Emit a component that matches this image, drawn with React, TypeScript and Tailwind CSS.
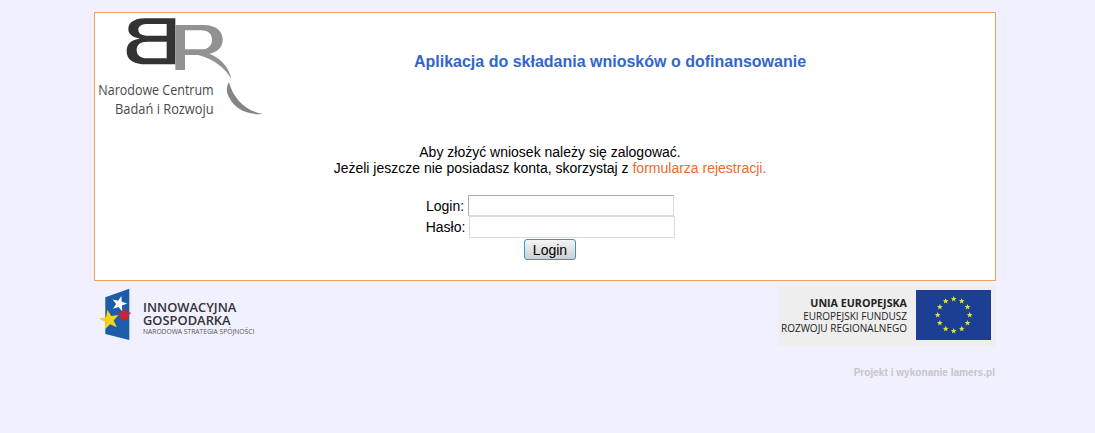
const sans = { fontFamily: '"Liberation Sans", Arial, sans-serif' }
const openSans = { fontFamily: '"Open Sans", sans-serif' }

// five-pointed star as polygon points
function star(cx: number, cy: number, outer: number, inner: number, rot = 0) {
  const pts: string[] = []
  for (let i = 0; i < 10; i++) {
    const r = i % 2 === 0 ? outer : inner
    const a = ((-90 + rot + i * 36) * Math.PI) / 180
    pts.push(`${(cx + r * Math.cos(a)).toFixed(2)},${(cy + r * Math.sin(a)).toFixed(2)}`)
  }
  return pts.join(' ')
}

function BrLogo() {
  return (
    <svg width="170" height="115" viewBox="15 24 510 345" className="block">
      <path
        fillRule="evenodd"
        fill="#333333"
        d="M256 40 H165 C130 40 115 55 115 72 C115 88 128 97 150 101 C125 104 110 115 110 138 C110 165 130 178 170 178 H256 Z M230 57 V92 H175 C155 92 145 85 145 74 C145 63 155 57 175 57 Z M230 110 V160 H172 C150 160 140 150 140 135 C140 120 150 110 172 110 Z"
      />
      <path
        fillRule="evenodd"
        fill="#929292"
        d="M256 60 H340 C380 60 398 80 398 104 C398 126 384 140 358 146 C395 160 418 190 424 222 C405 188 370 162 325 150 H285 V195 H256 Z M285 76 V133 H335 C355 133 366 120 366 104 C366 88 355 76 335 76 Z"
      />
      <path fill="#858585" d="M417 232 C430 280 465 318 518 327 C465 332 425 305 412 265 C409 252 411 240 417 232 Z" />
      <text x="25" y="270" fontSize="46" fill="#4a4a4a" textLength="346" lengthAdjust="spacingAndGlyphs" style={openSans}>
        Narodowe Centrum
      </text>
      <text x="75" y="328" fontSize="46" fill="#4a4a4a" textLength="296" lengthAdjust="spacingAndGlyphs" style={openSans}>
        Badań i Rozwoju
      </text>
    </svg>
  )
}

function InnowacyjnaLogo() {
  return (
    <div className="flex items-center">
      <svg width="40" height="60" viewBox="0 0 40 60" className="block">
        <path fill="#1d5ca8" d="M11.3 10.3 L35.3 1.7 V53 L11.3 47 Z" />
        <polygon fill="#ffffff" points={star(25.3, 16.8, 8, 3.2, 15)} />
        <polygon fill="#d2232a" points={star(30.3, 28, 7.5, 3.4, 0)} />
        <polygon fill="#f4d31f" points={star(15.3, 33, 10.5, 4.4, -10)} />
      </svg>
      <div className="ml-[9px] mt-[3px] text-[#333]" style={openSans}>
        <div className="text-[12.9px] leading-[13px] font-semibold">INNOWACYJNA</div>
        <div className="text-[12.9px] leading-[13px] font-semibold">GOSPODARKA</div>
        <div className="mt-[1px] text-[6.7px] leading-[8px] whitespace-nowrap text-[#555]">NARODOWA STRATEGIA SPÓJNOŚCI</div>
      </div>
    </div>
  )
}

const euStars = Array.from({ length: 12 }, (_, i) => {
  const a = (i * 30 * Math.PI) / 180
  return [37.7 + 16 * Math.sin(a), 25 - 16 * Math.cos(a)]
})

function EuLogo() {
  return (
    <div className="flex items-center bg-[#eeeeee] w-[218px] h-[60px] pl-[4px]">
      <div className="flex w-[125px] flex-col items-end text-[#222] text-[10px] leading-[12.5px]" style={openSans}>
        <div className="text-[10.7px] font-bold">UNIA EUROPEJSKA</div>
        <div>EUROPEJSKI FUNDUSZ</div>
        <div className="whitespace-nowrap">ROZWOJU REGIONALNEGO</div>
      </div>
      <svg width="75" height="50" viewBox="0 0 75 50" className="block ml-[9px] mb-[2px]">
        <rect width="75" height="50" fill="#1c3f94" />
        {euStars.map(([x, y], i) => (
          <polygon key={i} fill="#dfe23e" points={star(x, y, 3, 1.3)} />
        ))}
      </svg>
    </div>
  )
}

export default function App() {
  return (
    <div className="min-h-[433px] bg-[#f0f0ff] pt-3 pl-[94px]" style={sans}>
      <div className="w-[902px]">
        <div className="h-[269px] border border-[#f0a060] bg-white">
          <div className="flex h-[115px]">
            <BrLogo />
            <h1 className="flex-1 pr-[40px] pt-[39px] text-center text-[16px] leading-[20px] font-bold text-[#3366cc]">
              Aplikacja do składania wniosków o dofinansowanie
            </h1>
          </div>

          <div className="pl-[10px] pt-[16px] text-center text-[14px] leading-[16px] text-black">
            <p>Aby złożyć wniosek należy się zalogować.</p>
            <p>
              Jeżeli jeszcze nie posiadasz konta, skorzystaj z{' '}
              <a className="text-[#ed6b2c]">formularza rejestracji.</a>
            </p>

            <form className="mt-[19px] flex flex-col items-center">
              <label className="flex h-[21px] items-center gap-[4px]">
                <span>Login:</span>
                <input className="h-[21px] w-[206px] border border-[#ababab] border-b-[#dcdcdc] border-r-[#dcdcdc] bg-white" />
              </label>
              <label className="flex h-[22px] items-center gap-[4px] pl-[1px]">
                <span>Hasło:</span>
                <input type="password" className="h-[22px] w-[206px] border border-[#dcdcdc] bg-white" />
              </label>
              <button
                type="button"
                className="mt-[1px] h-[21px] w-[52px] rounded-[3px] border border-[#3a94cc] bg-gradient-to-b from-[#f4f4f4] to-[#cfcfcf] pt-[1px] text-[14px] leading-[17px] text-black"
              >
                Login
              </button>
            </form>
          </div>
        </div>

        <div className="mt-[5px] flex items-start justify-between">
          <div className="pt-[1px]">
            <InnowacyjnaLogo />
          </div>
          <EuLogo />
        </div>

        <p className="mt-[20px] pr-[1px] text-right text-[10.1px] leading-[12px] font-bold text-[#c6c6c6]">
          Projekt i wykonanie lamers.pl
        </p>
      </div>
    </div>
  )
}
